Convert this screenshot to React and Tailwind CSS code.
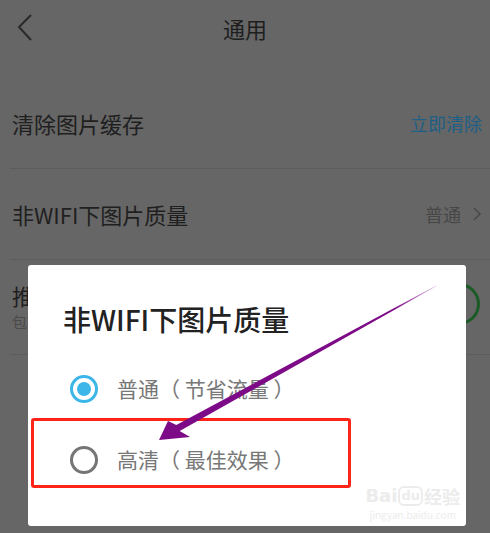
import React from "react"

const font = { fontFamily: '"Noto Sans CJK SC", "Noto Sans", sans-serif' }

function Radio({ checked }) {
    if (checked) {
        return <div className="w-[28px] h-[28px] rounded-full border-[3px] border-[#3cb6e8] flex items-center justify-center shrink-0">
            <div className="w-[14px] h-[14px] rounded-full bg-[#3cb6e8]"></div>
        </div>
    }
    return <div className="w-[28px] h-[28px] rounded-full border-[3px] border-[#757575] shrink-0"></div>
}

function App() {
    return <div className="relative w-[490px] h-[533px] overflow-hidden bg-[#666666]" style={font}>
        {/* header */}
        <div className="relative h-[56px] flex items-center justify-center">
            <svg className="absolute left-[15px] top-[13px]" width="20" height="30" viewBox="0 0 20 30">
                <polyline points="16,2 4,14 16,27" fill="none" stroke="#2a2a2a" strokeWidth="2" />
            </svg>
            <div className="text-[22px] text-[#1e1e1e] leading-none">通用</div>
        </div>
        <div className="h-[23px]"></div>

        {/* rows */}
        <div className="pl-[10px]">
            <div className="h-[90px] flex items-center justify-between pr-[8px] border-b border-[#5c5c5c]">
                <div className="text-[22px] text-[#1f1f1f] pl-[2px]">清除图片缓存</div>
                <div className="text-[18px] text-[#1d5f86]">立即清除</div>
            </div>
            <div className="h-[91px] flex items-center justify-between pr-[9px] border-b border-[#5c5c5c]">
                <div className="text-[22px] text-[#1f1f1f] pl-[2px]">非WIFI下图片质量</div>
                <div className="flex items-center gap-[12px]">
                    <span className="text-[18px] text-[#474747]">普通</span>
                    <svg width="8" height="14" viewBox="0 0 8 14">
                        <polyline points="1,1 7,7 1,13" fill="none" stroke="#474747" strokeWidth="1.5" />
                    </svg>
                </div>
            </div>
            <div className="h-[95px] flex items-center justify-between pr-[10px] border-b border-[#5c5c5c]">
                <div className="pl-[2px] flex flex-col">
                    <span className="text-[22px] text-[#1f1f1f] leading-[30px]">推送</span>
                    <span className="text-[15px] text-[#4a4a4a] leading-[24px]">包括</span>
                </div>
                <div className="w-[42px] h-[42px] rounded-full border-[3px] border-[#1a5a25] mb-[6px]"></div>
            </div>
        </div>

        {/* dialog */}
        <div className="absolute left-[28px] top-[265px] w-[438px] h-[261px] bg-white rounded-[3px]">
            <div className="pt-[37px] pl-[35px] text-[28px] font-medium text-[#222222] leading-[34px]">非WIFI下图片质量</div>
            <div className="mt-[39px] pl-[42px] flex flex-col gap-[43px]">
                <div className="flex items-center gap-[19px] h-[28px]">
                    <Radio checked />
                    <span className="text-[21px] text-[#777777]">普通（ 节省流量 ）</span>
                </div>
                <div className="flex items-center gap-[19px] h-[28px]">
                    <Radio />
                    <span className="text-[21px] text-[#777777]">高清（ 最佳效果 ）</span>
                </div>
            </div>
            <div className="absolute right-[6px] bottom-[4px] flex flex-col items-center">
                <div className="flex items-end text-[18px] font-bold text-[#ececec] leading-[20px]" style={{ fontFamily: '"DejaVu Sans", "Noto Sans CJK SC", sans-serif' }}>
                    <span>Bai</span>
                    <span className="text-[13px] leading-[16px] border-2 border-[#ececec] rounded-[6px] px-[1px] mx-[1px]">du</span>
                    <span style={font}>经验</span>
                </div>
                <div className="text-[10px] text-[#ececec] leading-[14px] mt-[2px]">jingyan.baidu.com</div>
            </div>
        </div>

        {/* annotation box */}
        <div className="absolute left-[31px] top-[418px] w-[320px] h-[70px] border-[3px] border-[#ff2418] rounded-[3px]"></div>

        {/* annotation arrow */}
        <svg className="absolute left-0 top-0" width="490" height="533" viewBox="0 0 490 533">
            <defs>
                <linearGradient id="ag" x1="436" y1="286" x2="395" y2="309" gradientUnits="userSpaceOnUse">
                    <stop offset="0" stopColor="#e6c8ea" />
                    <stop offset="1" stopColor="#7d0a86" />
                </linearGradient>
            </defs>
            <polygon points="436.2,286.3 179.7,431.1 190,437 159,440 168,421 176.3,424.9 435.8,285.7" fill="url(#ag)" />
        </svg>
    </div>
}
export default App
